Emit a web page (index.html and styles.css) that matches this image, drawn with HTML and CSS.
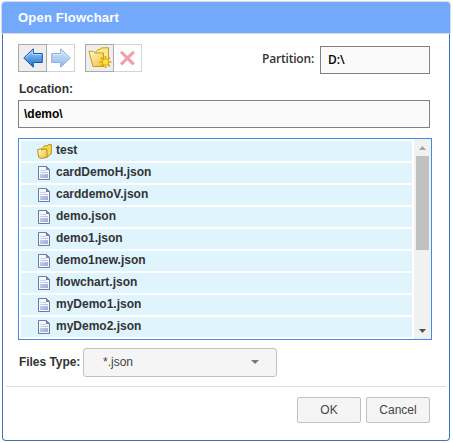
FILE: index.html
```html
<!DOCTYPE html>
<html lang="en">
<head>
<meta charset="utf-8">
<title>Open Flowchart</title>
<link rel="stylesheet" href="styles.css">
</head>
<body>
<svg width="0" height="0" class="defs">
  <defs>
    <linearGradient id="blue" x1="0" y1="0" x2="0" y2="1"><stop offset="0" stop-color="#9bd0fb"/><stop offset="1" stop-color="#1a6fd4"/></linearGradient>
    <linearGradient id="gold" x1="0" y1="0" x2="1" y2="1"><stop offset="0" stop-color="#fffbd0"/><stop offset="1" stop-color="#edc12f"/></linearGradient>
    <linearGradient id="paper" x1="0" y1="0" x2="1" y2="1"><stop offset="0" stop-color="#d5dcef"/><stop offset="1" stop-color="#9cabd4"/></linearGradient>
    <symbol id="arrow" viewBox="0 0 20 20"><path d="M.8 10 10.3.8V5.5H19.3V14.5H10.3V19.2Z" fill="url(#blue)" stroke="#1d55a5"/><path d="M2.5 9.8 9.3 3.2V6.5H18.2" fill="none" stroke="#c5e5ff" stroke-width=".8"/></symbol>
    <symbol id="file" viewBox="0 0 12 14"><path d="M.5.5H8.5L11.5 3.5V13.5H.5Z" fill="#f6f8fc" stroke="#6b7ca5"/><path d="M8.5.5V3.5H11.5" fill="#7e8eb5" stroke="#6b7ca5"/><path d="M2 4H8V5H2ZM2 6H10V7H2ZM2 8H10V12H2Z" fill="url(#paper)"/></symbol>
    <symbol id="folder" viewBox="0 0 14 14"><path d="M4 4.5 6 3.2 7 1.6 9.5 1.8 10.5.6H13.4V9L9 12.5H5Z" fill="#f5d94f" stroke="#b78b15" stroke-width=".9"/><path d="M.5 5.3 3.2 4.6 4.2 5.4 9 4.5 9.6 12.2 4.3 13.5 1.6 12.4Z" fill="url(#gold)" stroke="#b78b15" stroke-width=".9"/></symbol>
  </defs>
</svg>
<main class="dialog">
  <h1 class="title">Open Flowchart</h1>
  <div class="body">
    <div class="toolbar">
      <div class="group">
        <button class="tool active"><svg width="20" height="20"><use href="#arrow"/></svg></button>
        <button class="tool"><svg class="forward" width="20" height="20"><use href="#arrow"/></svg></button>
      </div>
      <div class="group">
        <button class="tool active"><svg width="24" height="22" viewBox="0 0 24 22"><path d="M8 4.5 10 2.5H12L13.2 1 20.5.7V17L8 18Z" fill="#fae88a" stroke="#c79b16"/><path d="M1 4.3H5.5L7 6H15.5V19.5H5Z" fill="url(#gold)" stroke="#c79b16"/><path d="M17.5 9V21M11.5 15H23.5M13.2 10.7 21.8 19.3M21.8 10.7 13.2 19.3" stroke="#daa50c" stroke-width="1.7"/><circle cx="17.5" cy="15" r="3.2" fill="#ffe33d" stroke="#e5ae10"/></svg></button>
        <button class="tool"><svg width="16" height="16" viewBox="0 0 16 16"><path d="M1 1.8 13.8 14.4M13.8 1.8 1 14.4" stroke="#f19eb0" stroke-width="3.2"/></svg></button>
      </div>
      <div class="partition"><span class="partition-label">Partition:</span><div class="field drive">D:\</div></div>
    </div>
    <div class="label"><span>Location:</span></div>
    <div class="field location">\demo\</div>
    <div class="list">
      <ul class="rows">
        <li><svg class="folder-icon" width="15" height="15"><use href="#folder"/></svg><span>test</span></li>
        <li><svg width="12" height="14"><use href="#file"/></svg><span>cardDemoH.json</span></li>
        <li><svg width="12" height="14"><use href="#file"/></svg><span>carddemoV.json</span></li>
        <li><svg width="12" height="14"><use href="#file"/></svg><span>demo.json</span></li>
        <li><svg width="12" height="14"><use href="#file"/></svg><span>demo1.json</span></li>
        <li><svg width="12" height="14"><use href="#file"/></svg><span>demo1new.json</span></li>
        <li><svg width="12" height="14"><use href="#file"/></svg><span>flowchart.json</span></li>
        <li><svg width="12" height="14"><use href="#file"/></svg><span>myDemo1.json</span></li>
        <li><svg width="12" height="14"><use href="#file"/></svg><span>myDemo2.json</span></li>
      </ul>
      <div class="scrollbar">
        <svg width="7" height="4" viewBox="0 0 7 4"><path d="M0 4 3.5 0 7 4Z" fill="#a3a3a3"/></svg>
        <div class="thumb"></div>
        <svg class="down" width="7" height="4" viewBox="0 0 7 4"><path d="M0 0 3.5 4 7 0Z" fill="#505050"/></svg>
      </div>
    </div>
    <div class="types"><span class="types-label">Files Type:</span><div class="select"><span>*.json</span><svg width="8" height="4" viewBox="0 0 8 4"><path d="M0 0 4 4 8 0Z" fill="#777"/></svg></div></div>
    <div class="footer"><button>OK</button><button>Cancel</button></div>
  </div>
</main>
</body>
</html>
```
FILE: styles.css
```css
* { box-sizing: border-box; }
body { margin: 0; background: #fff; font: bold 12px/14px "Liberation Sans", Arial, sans-serif; color: #333; }
svg { display: block; flex: none; }
.defs { position: absolute; }
button { margin: 0; padding: 0; font: inherit; color: inherit; }
.dialog { width: 450px; margin-left: 1px; padding-top: 1px; }
.title { height: 33px; margin: 0; padding: 8px 16px; border: 1px solid #d9dde3; border-radius: 4px 4px 0 0; background: #72a9fb; color: #fff; font-size: 13px; line-height: 15px; letter-spacing: .2px; }
.body { width: 448px; height: 407px; margin-left: 1px; padding: 10px 0 0 15px; border: 1px solid #3b73c3; border-top: 0; border-radius: 0 0 4px 4px; }
.toolbar { display: flex; width: 412px; height: 30px; }
.group { display: flex; height: 28px; margin-right: 10px; }
.tool { display: flex; align-items: center; justify-content: center; width: 28px; height: 28px; border: 1px solid #d3d3d3; border-left: 0; background: #fff; }
.tool.active { width: 29px; border: 1px solid #aaa; background: #eee; }
.forward { transform: scaleX(-1); opacity: .48; }
.partition { display: flex; margin-left: auto; gap: 6px; padding-top: 2px; font-family: "Open Sans", sans-serif; font-weight: 600; }
.partition-label { padding-top: 6px; letter-spacing: -.2px; }
.field { height: 28px; border: 1px solid #808080; background: #fafafa; color: #000; padding: 6px 5px; }
.drive { width: 110px; padding: 6px 7px 0; }
.label { height: 26px; padding-top: 8px; padding-left: 1px; }
.location { width: 412px; }
.list { display: flex; justify-content: space-between; width: 414px; height: 202px; margin-top: 10px; border: 1px solid #448be8; padding-left: 2px; }
.rows { width: 391px; margin: 0; padding: 2px 0 0; list-style: none; }
.rows li { display: flex; align-items: center; gap: 6px; height: 20px; margin-bottom: 2px; padding-left: 17px; padding-bottom: 3px; background: #e0f4fe; }
.rows svg { position: relative; top: 1.5px; }
.rows .folder-icon { top: 2px; margin: 0 -2px 0 -1px; }
.scrollbar { display: flex; flex-direction: column; align-items: center; width: 17px; padding: 7px 0 6px; background: #f1f1f1; }
.thumb { width: 13px; height: 94px; margin-top: 6px; background: #c1c1c1; }
.down { margin-top: auto; }
.types { display: flex; height: 46px; padding-top: 8px; }
.types-label { width: 65px; padding-top: 7px; padding-left: 1px; white-space: nowrap; letter-spacing: -.05px; }
.select { display: flex; align-items: center; justify-content: space-between; width: 194px; height: 29px; border: 1px solid #c1c1c1; border-radius: 3px; background: #f5f5f5; padding: 0 17px 2px 19px; font-weight: normal; color: #444; }
.footer { display: flex; justify-content: flex-end; gap: 5px; width: 440px; margin-left: -12px; padding: 10px 16px 0 0; border-top: 1px solid #ddd; }
.footer button { width: 64px; height: 26px; border: 1px solid #c1c1c1; border-radius: 2px; background: #f5f5f5; font-weight: normal; color: #444; }
```
